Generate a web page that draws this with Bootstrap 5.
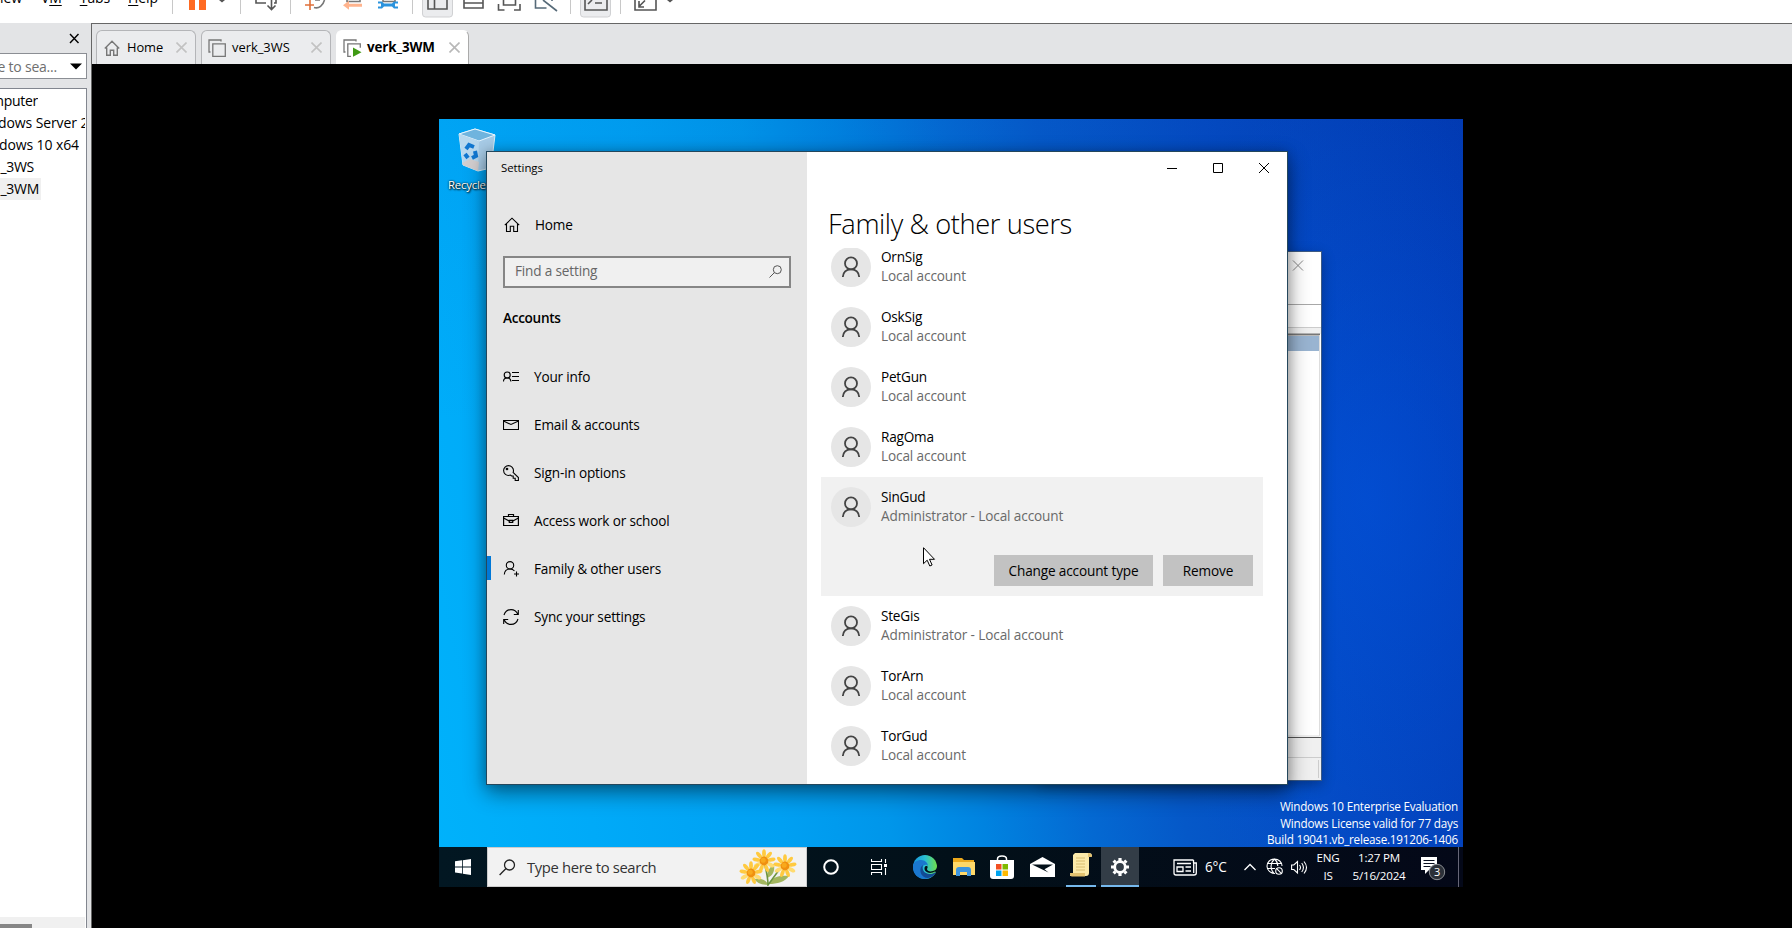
<!DOCTYPE html>
<html lang="en">
<head>
<meta charset="utf-8">
<title>Workstation</title>
<link href="https://cdn.jsdelivr.net/npm/bootstrap@5.3.0/dist/css/bootstrap.min.css" rel="stylesheet">
<script src="https://cdn.jsdelivr.net/npm/bootstrap@5.3.0/dist/js/bootstrap.bundle.min.js"></script>
<style>
body{font-family:"Open Sans","Noto Sans",sans-serif;font-size:13.6px;letter-spacing:-.22px;color:#000;background:#000;white-space:nowrap}
svg{display:block;flex:none}
.toolstrip{height:23px;background:#fff}
.menus{width:172px;height:22px;font-size:14px;line-height:20px;margin-top:-12px;letter-spacing:-.1px}
.menus span{flex:none}
.menus u{text-underline-offset:2px}
.side-panel{width:91px;background:#e3e4e6;padding-top:30px}
.side-search{width:87px;height:26px;background:#fff;border:1px solid #8b8e94;border-left:0;color:#6f6f6f;font-size:14px}
.clip-end{display:flex;justify-content:flex-end;overflow:hidden}
.tree{width:87px;background:#fff;border:1px solid #82868f;border-left:0;border-bottom:0;margin-top:9px;padding-top:1px;font-size:14px;letter-spacing:-.3px}
.tree>div{flex:none}
.tree .clip-end{height:22px;line-height:22px}
.tree-cut{width:85px;height:22px;line-height:22px;overflow:hidden}
.hbar{height:11px;width:85px;background:#f0f0f0;padding-top:7px}
.hbar i{display:block;width:32px;height:4px;background:#868686}
.work{border-left:1px solid #666;border-top:1px solid #666}
.tabstrip{height:40px;background:#e3e4e6;padding:6px 0 0 4px}
.vtab{height:34px;background:#ebecee;border:1px solid #b4b5b8;border-bottom:0;border-radius:6px 6px 0 0;padding-left:7px;font-size:12.9px;letter-spacing:-.1px}
.vtab.on{background:#fff;border-color:#fff #aaa #fff #fff;font-weight:700}
.canvas-area{background:#000;padding:55px 0 0 347px}
.desktop{width:1024px;height:768px;overflow:hidden;
background:radial-gradient(ellipse 260px 420px at 930px 380px,rgba(0,92,240,.4),transparent),
linear-gradient(to bottom,rgba(0,90,190,.08),transparent 40%),
linear-gradient(78deg,#00b2fb 0,#00aaf8 14%,#00a0f2 30%,#0096ea 39%,#0083e0 47%,#0469d2 56%,#0558c8 64%,#0448c0 78%,#0237b0 100%)}
.bin{left:7px;top:8px;width:70px;color:#fff;font-size:11.4px;text-shadow:1px 1px 2px #000,0 0 2px #000}
.backwin{left:600px;top:132px;width:283px;height:530px;background:#fff;border:1px solid #3d5a83;box-shadow:0 4px 12px rgba(0,0,0,.3)}
.settings{left:47px;top:32px;width:802px;height:634px;border:1px solid #24475c;box-shadow:0 8px 20px rgba(0,0,0,.45),0 0 10px rgba(0,0,0,.18)}
.nav-side{width:320px;background:#e6e6e6;letter-spacing:-.17px}
.win-title{height:32px;padding-left:14px;font-size:11.4px;letter-spacing:-.05px}
.home-row{height:48px;margin-top:17px;padding-left:17px;gap:15px}
.find{width:288px;height:32px;margin:7px 0 0 16px;border:2px solid #868686;background:#f0f0f0;color:#666;padding:0 7px 1px 10px}
.sect{height:47px;margin:6px 0 12px 16px;font-weight:600;line-height:47px;letter-spacing:-.3px}
.nav-entry{height:48px;gap:15px;padding-left:16px}
.marker{width:4px;height:24px;background:#0078d7;left:0;top:11px}
.main-pane{width:480px;background:#fff}
.page-title{font-size:27.3px;font-weight:300;line-height:40px;margin:20px 0 4px 21px;letter-spacing:-.4px}
.users{height:535px;overflow:hidden;padding:0 24px 0 14px}
.users>div:first-child{margin-top:-11px}
.usr{height:60px;padding:10px;gap:10px;line-height:19px}
.usr.sel{height:119px;background:#f1f1f1}
.usr .sub{color:#6a6a6a;letter-spacing:-.12px}
.face{width:40px;height:40px;border-radius:50%;background:#e6e6e6}
.wbtn{height:31px;background:#c2c2c2;line-height:31px;text-align:center;letter-spacing:-.15px}
.water{right:5px;top:679px;color:#fff;font-size:11.7px;line-height:16.7px;text-align:right}
.taskbar{top:728px;left:0;width:1024px;height:40px;background:linear-gradient(90deg,#021722,#021019 50%,#040818);color:#fff}
.tsearch{width:320px;height:40px;background:#f2f2f2;border:1px solid #ccc;color:#333;font-size:14.8px;letter-spacing:-.36px;padding-left:11px}
.slot{display:flex;align-items:center;justify-content:center;height:40px;flex:none}
.under{border-bottom:2px solid #76b9ed;padding-top:2px}
.clock{font-size:11.6px;line-height:18px;text-align:center;flex:none}
</style>
</head>
<body class="vh-100 overflow-hidden d-flex flex-column">
<svg width="0" height="0" class="position-absolute">
<defs>
<g id="person"><circle cx="20" cy="16.4" r="6" fill="none" stroke="#444" stroke-width="1.8"/><path d="M11.8 30c.4-5 3.6-7.700 8.200-7.700s7.800 2.700 8.200 7.700" fill="none" stroke="#444" stroke-width="1.8"/></g>
<g id="bloom"><g fill="#ffca40"><ellipse cy="-7.500" rx="1.900" ry="4.200"/><ellipse cy="-7.500" rx="1.900" ry="4.200" transform="rotate(40)"/><ellipse cy="-7.500" rx="1.900" ry="4.200" transform="rotate(80)"/><ellipse cy="-7.500" rx="1.900" ry="4.200" transform="rotate(120)" fill="#ffdb70"/><ellipse cy="-7.500" rx="1.900" ry="4.200" transform="rotate(160)"/><ellipse cy="-7.500" rx="1.900" ry="4.200" transform="rotate(200)"/><ellipse cy="-7.500" rx="1.900" ry="4.200" transform="rotate(240)" fill="#ffdb70"/><ellipse cy="-7.500" rx="1.900" ry="4.200" transform="rotate(280)"/><ellipse cy="-7.500" rx="1.900" ry="4.200" transform="rotate(320)"/></g><circle r="4.400" fill="#f09010"/><circle cx="-.8" cy="-.8" r="2.500" fill="#f8a91c"/></g>
</defs></svg>

<header class="toolstrip d-flex flex-shrink-0 overflow-hidden">
 <nav class="menus d-flex flex-shrink-0">
  <span class="clip-end" style="width:22px">View</span><span style="margin-left:19px">V<u>M</u></span><span style="margin-left:18px"><u>T</u>abs</span><span style="margin-left:18px"><u>H</u>elp</span>
 </nav>
 <svg width="520" height="22" viewBox="172 0 520 22" fill="none" stroke="#555" stroke-width="1.6">
  <g stroke="#c8c8c8" stroke-width="1"><path d="M172.500 0v14M240.500 0v14M290.500 0v14M412.500 0v14M570.500 0v14M620.500 0v14"/></g>
  <path d="M189 0h6v10h-6zM199 0h7v10h-7z" fill="#ff6a22" stroke="none"/>
  <path d="M219 0h6l-3 2.500zM667 0h6l-3 2.500z" fill="#555" stroke="none"/>
  <path d="M256 0v3h10M276 0v3h-2M271.500 0v9M267.500 5.500l4 4 4-4"/>
  <path d="M314 7.500c5 1.500 9-2 10.500-7.500M320 0h-5" stroke="#777"/><path d="M310 0v10M305 5h9" stroke="#e0703a"/>
  <path d="M347 0v1.500h13V0" stroke="#777"/><path d="M343 5.200l6-4.500v3h13v3h-13v3z" fill="#ffb48e" stroke="none"/>
  <path d="M383 0v1.500h12V0" stroke="#777"/><path d="M378 1.500h4l2 2h8l2-2h4v2h-3v3h3v2h-4l-2-2h-8l-2 2h-4v-2h3v-3h-3z" fill="#2b93dd" stroke="none"/>
  <g fill="#ebecee" stroke="#d0d1d3" stroke-width="1"><path d="M422.500-2v16q0 3 3 3h24q3 0 3-3V-2zM580.500-2v16q0 3 3 3h24q3 0 3-3V-2z"/></g>
  <path d="M428 0v9h19V0M434.500 0v9"/>
  <path d="M464 0v8h19V0M464 3h19"/>
  <path d="M498.500 4v6h6M520 4v6h-6M503.500 0v5h12V0"/>
  <path d="M535.500 0v8h11M552 0v1M543 0l14 11" stroke="#566a78"/>
  <path d="M585 0v10h22V0M588 4l4-4M595 3h7"/>
  <path d="M635 0v10h21V0M639 1v6h5M639 6.500l6-6"/>
 </svg>
</header>

<div class="d-flex flex-grow-1 overflow-hidden">
 <aside class="side-panel d-flex flex-column flex-shrink-0 position-relative">
  <svg class="position-absolute" style="left:69px;top:10px" width="11" height="11" stroke="#000" stroke-width="1.400"><path d="M1 1l8.500 9M9.500 1L1 10"/></svg>
  <div class="side-search d-flex align-items-center flex-shrink-0"><span class="clip-end" style="width:57px">e to sea...</span>
   <svg class="ms-auto me-1" width="12" height="7"><path d="M0 .5h12L6 6.500z"/></svg></div>
  <div class="tree flex-grow-1 d-flex flex-column overflow-hidden">
   <div class="clip-end" style="width:38px">mputer</div>
   <div class="tree-cut"><span style="margin-left:-2px;letter-spacing:-.1px">dows Server 2</span></div>
   <div class="clip-end" style="width:79px;letter-spacing:-.1px">dows 10 x64</div>
   <div class="clip-end" style="width:34px">_3WS</div>
   <div class="clip-end" style="width:41px;background:#f0f0f0;padding-right:2px">_3WM</div>
   <div class="hbar mt-auto"><i></i></div>
  </div>
 </aside>

 <section class="work flex-grow-1 d-flex flex-column overflow-hidden">
  <div class="tabstrip d-flex flex-shrink-0">
   <div class="vtab d-flex align-items-center" style="width:100px">
    <svg width="16" height="16" fill="none" stroke="#777" stroke-width="1.400"><path d="M.8 8.500L8 1.300l7.200 7.200M2.700 7.500v7.700h3.600v-5h3.400v5h3.600V7.500"/></svg><span style="margin-left:7px">Home</span>
    <svg class="ms-auto me-2" width="11" height="11" stroke="#c2c2c2" stroke-width="1.600"><path d="M.5.5l10 10M10.500.5l-10 10"/></svg></div>
   <div class="vtab d-flex align-items-center" style="width:130px;margin-left:5px;padding-left:6px">
    <svg width="18" height="18" fill="none" stroke="#777" stroke-width="1.300"><path d="M2.500 13H1V1h12v1.500M4.800 4.800h12.500v12.500H4.800z"/></svg><span style="margin-left:6px;letter-spacing:0">verk_3WS</span>
    <svg class="ms-auto me-2" width="11" height="11" stroke="#c2c2c2" stroke-width="1.600"><path d="M.5.5l10 10M10.500.5l-10 10"/></svg></div>
   <div class="vtab on d-flex align-items-center" style="width:133px;margin-left:5px;padding-left:6px">
    <svg width="19" height="18" fill="none" stroke="#777" stroke-width="1.300"><path d="M2.500 13H1V1h12v1.500M8 17.300H4.800V4.800h12.500v4"/><path d="M10 8.500l8.500 4.700-8.500 4.500z" fill="#3f9a14" stroke="none"/></svg><span style="margin-left:5px;font-size:13.4px">verk_3WM</span>
    <svg class="ms-auto me-2" width="11" height="11" stroke="#b8b8b8" stroke-width="1.600"><path d="M.5.5l10 10M10.500.5l-10 10"/></svg></div>
  </div>
  <div class="canvas-area flex-grow-1">
   <div class="desktop position-relative">
    <div class="bin position-absolute">
     <svg width="42" height="46" style="margin-left:11px" viewBox="0 0 42 46"><path d="M2 7L18 2l20 6-4 33-13 3-15-6z" fill="#a7cbe6" stroke="#d8edf8"/><path d="M2 7L18 2l20 6-16 6z" fill="#6fb4de" stroke="#e6f5ff"/><path d="M22 14l-1 30-15-6L2 7z" fill="#b8d8ee"/><path d="M5 36l8-4 9 3-1 9-15-6z" fill="#d3cfd0"/><g fill="none" stroke="#1177d0" stroke-width="4"><path d="M9 22l3-4 5 2M18 24l1 5-4 2M11 31l-3-4"/></g></svg>
     <div style="margin-left:2px;margin-top:3px">Recycle Bin</div>
    </div>

    <div class="backwin position-absolute">
     <svg width="281" height="528" viewBox="0 0 281 528">
      <path d="M0 52.500h281" stroke="#a8a8a8"/><path d="M0 75.500h281" stroke="#ccc"/><path d="M0 76h281v6H0z" fill="#f0f0f0"/><path d="M0 82.500h280" stroke="#777" stroke-width="2"/><path d="M0 84h279v15H0z" fill="#99b4d1"/><path d="M279.500 83v401H0" fill="none" stroke="#ddd"/><path d="M0 486h281v42H0z" fill="#f0f0f0"/><path d="M0 485.500h281" stroke="#555"/><path d="M0 505.500h281M278.500 508v18" stroke="#ccc"/>
      <path d="M253 8.500l10 10M263 8.500l-10 10" stroke="#888" fill="none"/></svg>
    </div>

    <div class="settings position-absolute d-flex">
     <div class="nav-side d-flex flex-column">
      <div class="win-title d-flex align-items-center">Settings</div>
      <div class="home-row d-flex align-items-center"><svg width="16" height="16" fill="none" stroke="#000" stroke-width="1.100"><path d="M.8 8.200L8 1.200l7.200 7M2.500 7v7.500h3.800V9.300h3.400v5.200h3.800V7"/></svg>Home</div>
      <div class="find d-flex align-items-center justify-content-between">Find a setting<svg width="13" height="13" fill="none" stroke="#555"><circle cx="8.300" cy="4.700" r="4"/><path d="M5.500 7.500L.5 12.500"/></svg></div>
      <div class="sect">Accounts</div>
      <div class="nav-entry d-flex align-items-center"><svg width="16" height="16" fill="none" stroke="#000" stroke-width="1.100"><circle cx="4.200" cy="6" r="3"/><path d="M.5 12.500c0-2.200 1.600-3.500 3.700-3.500s3.700 1.300 3.700 3.500M9 3.500h7M9 7.500h7M9 11.500h7"/></svg>Your info</div>
      <div class="nav-entry d-flex align-items-center"><svg width="16" height="16" fill="none" stroke="#000" stroke-width="1.100"><path d="M.5 3.500h15v9H.5zM.5 4l7.500 3.500L15.500 4"/></svg>Email &amp; accounts</div>
      <div class="nav-entry d-flex align-items-center"><svg width="16" height="16" fill="none" stroke="#000" stroke-width="1.100"><path d="M6.500 10.300C3.500 11 .6 8.800.6 5.600.6 2.800 2.800.6 5.500.6s5 2.200 5 5c0 .7-.1 1.300-.4 1.900l5.300 5v3h-3.200v-2.200h-2V11H8.500l-1-.9z"/><circle cx="4" cy="4" r=".8"/></svg>Sign-in options</div>
      <div class="nav-entry d-flex align-items-center"><svg width="16" height="16" fill="none" stroke="#000" stroke-width="1.200"><path d="M.6 3.500h14.800v9H.6zM5.500 3.500v-2h5v2M.6 5l5.500 3M15.400 5l-5.500 3M6.300 7.300h3.400v2H6.300z"/></svg>Access work or school</div>
      <div class="nav-entry d-flex align-items-center position-relative"><i class="marker position-absolute"></i><svg width="16" height="16" fill="none" stroke="#000" stroke-width="1.100"><circle cx="7" cy="4.300" r="3.700"/><path d="M1.300 13.500c.2-3.300 2.400-5.500 5.700-5.500 2 0 3.500.8 4.500 2M13.500 10.500v5M11 13h5"/></svg>Family &amp; other users</div>
      <div class="nav-entry d-flex align-items-center"><svg width="16" height="16" fill="none" stroke="#000" stroke-width="1.100"><path d="M1 6C2 2.800 4.700.6 8 .6c3 0 5.500 1.700 6.700 4.400M15.300 1v4.500h-4.500M15 10c-1 3.200-3.700 5.400-7 5.400-3 0-5.500-1.700-6.700-4.400M.7 15v-4.500h4.500"/></svg>Sync your settings</div>
     </div>
     <div class="main-pane d-flex flex-column">
      <div class="d-flex justify-content-end" style="height:32px">
       <svg width="138" height="32" fill="none" stroke="#000"><path d="M18 16.500h10M64.500 11.500h9v9h-9zM110 11l10 10M120 11l-10 10"/></svg></div>
      <div class="page-title">Family &amp; other users</div>
      <div class="users">
       <div class="usr d-flex"><svg class="face"><use href="#person"/></svg><div>OrnSig<div class="sub">Local account</div></div></div>
       <div class="usr d-flex"><svg class="face"><use href="#person"/></svg><div>OskSig<div class="sub">Local account</div></div></div>
       <div class="usr d-flex"><svg class="face"><use href="#person"/></svg><div>PetGun<div class="sub">Local account</div></div></div>
       <div class="usr d-flex"><svg class="face"><use href="#person"/></svg><div>RagOma<div class="sub">Local account</div></div></div>
       <div class="usr sel d-flex flex-column justify-content-between">
        <div class="d-flex" style="gap:10px"><svg class="face"><use href="#person"/></svg><div>SinGud<div class="sub">Administrator - Local account</div></div></div>
        <div class="d-flex justify-content-end" style="gap:10px"><div class="wbtn" style="width:159px">Change account type</div><div class="wbtn" style="width:90px">Remove</div></div>
       </div>
       <div class="usr d-flex"><svg class="face"><use href="#person"/></svg><div>SteGis<div class="sub">Administrator - Local account</div></div></div>
       <div class="usr d-flex"><svg class="face"><use href="#person"/></svg><div>TorArn<div class="sub">Local account</div></div></div>
       <div class="usr d-flex"><svg class="face"><use href="#person"/></svg><div>TorGud<div class="sub">Local account</div></div></div>
      </div>
     </div>
    </div>
    <svg class="position-absolute" style="left:484px;top:428px" width="13" height="20"><path d="M.5.7v16l3.700-3.500 2.600 5.800 2.300-1-2.600-5.700h5z" fill="#fff" stroke="#000"/></svg>

    <div class="water position-absolute">Windows 10 Enterprise Evaluation<br>Windows License valid for 77 days<br>Build 19041.vb_release.191206-1406</div>

    <footer class="taskbar position-absolute d-flex align-items-center">
     <div class="slot" style="width:48px"><svg width="16" height="16" fill="#fff"><path d="M0 2.300l7-1v6.200H0zM7.800 1.200L16 0v7.500H7.800zM0 8.400h7v6.200l-7-1zM7.800 8.400H16V16l-8.200-1.200z"/></svg></div>
     <div class="tsearch d-flex align-items-center">
      <svg width="17" height="17" fill="none" stroke="#222" stroke-width="1.300"><circle cx="10.500" cy="6" r="5"/><path d="M7 9.500L.6 16"/></svg><span style="margin-left:11px">Type here to search</span>
      <svg class="ms-auto me-2" width="60" height="38" viewBox="0 0 60 38"><path d="M31 37c-4-6-9-7-15-6 4 5 9 6 15 6zM31 36c4-8 11-9 20-8-4 6-12 8-20 8zM29 30c0-7 3-11 7-14 1 7-1 12-7 14z" fill="#a3b65e"/><path d="M26 14c2 8 4 14 4 23l11-15" fill="none" stroke="#6c9440" stroke-width="1.600"/><use href="#bloom" x="26" y="13"/><use href="#bloom" x="47" y="18"/><use href="#bloom" transform="translate(13 25)"/></svg>
     </div>
     <div class="slot" style="width:48px"><svg width="18" height="18"><circle cx="9" cy="9" r="6.800" fill="none" stroke="#fff" stroke-width="2"/></svg></div>
     <div class="slot" style="width:48px"><svg width="16" height="16" fill="none" stroke="#fff" stroke-width="1.100"><path d="M.5 0v2.500h10V0M.5 5.500h10v5H.5zM.5 16v-2.500h10V16M14.500 0v4M14.500 9v7"/><path d="M13 5h3v3h-3z" fill="#fff" stroke="none"/></svg></div>
     <div class="slot" style="width:44px"><svg width="24" height="24" viewBox="0 0 24 24"><defs><linearGradient id="ea" x1="0" x2="1"><stop stop-color="#1593dc"/><stop offset=".5" stop-color="#29bfd3"/><stop offset="1" stop-color="#6fe04a"/></linearGradient></defs><circle cx="12" cy="12" r="12" fill="url(#ea)"/><path d="M0 12c0-5 4-7 8-7 4 0 7 3 7 6-1-2-5-2-6 2-.8 4 3 7 7 7 3 0 5-1 7-3-2 4-6 7-11 7C5 24 0 19 0 12z" fill="#1a77cf"/><path d="M8 12c-2 5 1 11 7 11 4-1 7-3 8-6-3 2-7 3-10 1-3-1-4-5-3-8z" fill="#124b94"/><path d="M13 11c2 0 2 1 1 3 0 2 3 3 6 2 3-.5 4-3 4-4.500l1 7-3-2c-3 2-8 2-10-1-1-2-.5-4 1-4.500z" fill="#021019"/></svg></div>
     <div class="slot" style="width:34px"><svg width="22" height="20" viewBox="0 0 22 20"><path d="M0 1h9l2 2h10v14H0z" fill="#eca91c"/><path d="M0 5h22v13H0z" fill="#ffd868"/><path d="M3 19v-6q0-3 3-3h9q3 0 3 3v6h-4v-4H7v4z" fill="#3d95df"/></svg></div>
     <div class="slot" style="width:42px"><svg width="24" height="24" viewBox="0 0 24 24"><path d="M7.500 6V4q0-3 4.500-3t4.500 3v2" fill="none" stroke="#fff" stroke-width="1.500"/><path d="M0 5h24v16q0 3-3 3H3q-3 0-3-3z" fill="#fff"/><path d="M6 9h5.500v5.500H6z" fill="#f25022"/><path d="M12.500 9H18v5.500h-5.500z" fill="#7fba00"/><path d="M6 15.500h5.500V21H6z" fill="#00a4ef"/><path d="M12.500 15.500H18V21h-5.500z" fill="#ffb900"/></svg></div>
     <div class="slot" style="width:38px"><svg width="25" height="20" viewBox="0 0 25 20"><path d="M0 7l12.500-7L25 7v13H0z" fill="#fff"/><path d="M2 7.500h21l-8.500 4.700 4 3.300z" fill="#021019"/></svg></div>
     <div class="slot under" style="width:30px;margin-left:5px"><svg width="22" height="24" viewBox="0 0 22 24" class="mb-1"><path d="M5 0h14q3 0 3 3h-3v17q0 3-3 3H0q0-3 3-3V2z" fill="#fbe9a9"/><path d="M18 0q4 0 4 4h-4zM0 20h15v3.500H2q-2 0-2-3.500z" fill="#e3c270"/><path d="M6 5h9M6 8h9M6 11h9M6 14h9M6 17h9" stroke="#d8bd70"/></svg></div>
     <div class="slot under" style="width:38px;margin-left:5px;background:#333d47"><svg width="20" height="20" viewBox="-10 -10 20 20"><circle r="5.300" fill="none" stroke="#fff" stroke-width="2.800"/><path d="M0-9v3M0 9v-3M9 0h-3M-9 0h3M6.400-6.400L4.600-4.600M-6.400 6.400l1.800-1.800M6.400 6.400L4.600 4.600M-6.400-6.400l1.800 1.800" stroke="#fff" stroke-width="3.200"/></svg></div>
     <svg style="margin-left:34px" width="24" height="17" fill="none" stroke="#fff" stroke-width="1.300"><path d="M20.500 1H1v13q0 2 2 2h18q2.300 0 2.300-2V4h-2.600v10M20.500 1v3M4 4.500h14M4 8h6v4.500H4zM12.500 8H18M12.500 12H18"/></svg>
     <span style="margin-left:8px;width:30px">6°C</span>
     <svg style="margin-left:9px" width="12" height="8" fill="none" stroke="#fff" stroke-width="1.300"><path d="M.5 7L6 1.500 11.500 7"/></svg>
     <svg style="margin-left:10px" width="18" height="18" fill="none" stroke="#fff" stroke-width="1.100"><path d="M9 15.500C4.800 15.500 1 12.200 1 8.200 1 4 4.500 1 8.500 1S16 4 16 8M8.500 1C4 5 4 11.500 8 15.500M8.500 1c2.300 2 3.300 4.500 3.300 7M1.500 5.500h14M1.300 10.500H9"/><circle cx="13" cy="13" r="3.300"/><path d="M10.700 10.700l4.600 4.600"/></svg>
     <svg style="margin-left:7px" width="17" height="15" fill="none" stroke="#fff" stroke-width="1.100"><path d="M.6 5v4.500h2.200L6.500 13V1.500L2.800 5zM8.500 5q2 2.500 0 5M10.700 3q3.500 4.500 0 9M13 1.500q5 6 0 12"/></svg>
     <div class="clock" style="width:28px;margin-left:6px">ENG<br>IS</div>
     <div class="clock" style="width:60px;margin-left:7px">1:27 PM<br>5/16/2024</div>
     <svg style="margin-left:11px" width="30" height="28" viewBox="0 0 30 28"><path d="M1 4h16v13H9l-4 4v-4H1z" fill="#fff"/><path d="M3.500 7.500h11M3.500 10.500h11M3.500 13.500h7" stroke="#0a1020" stroke-width="1.200"/><circle cx="17" cy="19" r="7.700" fill="#2b3038" stroke="#8a8d92"/><text x="17" y="23" font-size="11" text-anchor="middle" fill="#fff">3</text></svg>
     <i class="ms-auto" style="width:1px;height:40px;background:#667;margin-right:4px"></i>
    </footer>
   </div>
  </div>
 </section>
</div>
</body>
</html>
